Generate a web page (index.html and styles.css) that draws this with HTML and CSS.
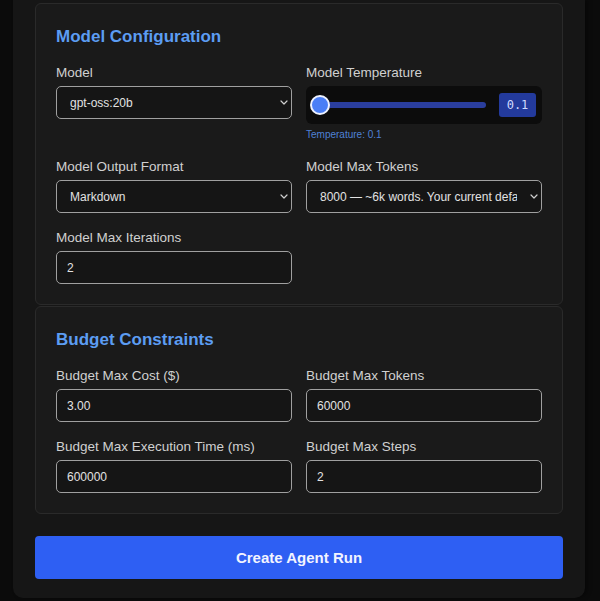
FILE: index.html
```html
<!DOCTYPE html>
<html>
<head>
<meta charset="utf-8">
<link rel="stylesheet" href="styles.css">
</head>
<body>
<div class="panel">
  <section class="card">
    <h2 class="card-title">Model Configuration</h2>
    <div class="grid">
      <div class="field">
        <label class="label">Model</label>
        <div class="select-wrap">
          <select class="control select"><option>gpt-oss:20b</option></select>
          <svg class="chev" width="8" height="5" viewBox="0 0 8 5"><path d="M1 1 L4 4 L7 1" fill="none" stroke="#cfcfcf" stroke-width="1.2" stroke-linecap="round" stroke-linejoin="round"/></svg>
        </div>
      </div>
      <div class="field">
        <label class="label">Model Temperature</label>
        <div class="temp-box">
          <div class="slider">
            <div class="track"></div>
            <div class="thumb"></div>
          </div>
          <div class="temp-value">0.1</div>
        </div>
        <div class="hint">Temperature: 0.1</div>
      </div>
      <div class="field">
        <label class="label">Model Output Format</label>
        <div class="select-wrap">
          <select class="control select"><option>Markdown</option></select>
          <svg class="chev" width="8" height="5" viewBox="0 0 8 5"><path d="M1 1 L4 4 L7 1" fill="none" stroke="#cfcfcf" stroke-width="1.2" stroke-linecap="round" stroke-linejoin="round"/></svg>
        </div>
      </div>
      <div class="field">
        <label class="label">Model Max Tokens</label>
        <div class="select-wrap">
          <select class="control select"><option>8000 — ~6k words. Your current default</option></select>
          <svg class="chev" width="8" height="5" viewBox="0 0 8 5"><path d="M1 1 L4 4 L7 1" fill="none" stroke="#cfcfcf" stroke-width="1.2" stroke-linecap="round" stroke-linejoin="round"/></svg>
        </div>
      </div>
      <div class="field">
        <label class="label">Model Max Iterations</label>
        <input class="control input" type="text" value="2">
      </div>
    </div>
  </section>
  <section class="card card-second">
    <h2 class="card-title">Budget Constraints</h2>
    <div class="grid">
      <div class="field">
        <label class="label">Budget Max Cost ($)</label>
        <input class="control input" type="text" value="3.00">
      </div>
      <div class="field">
        <label class="label">Budget Max Tokens</label>
        <input class="control input" type="text" value="60000">
      </div>
      <div class="field">
        <label class="label">Budget Max Execution Time (ms)</label>
        <input class="control input" type="text" value="600000">
      </div>
      <div class="field">
        <label class="label">Budget Max Steps</label>
        <input class="control input" type="text" value="2">
      </div>
    </div>
  </section>
  <button class="submit">Create Agent Run</button>
</div>
</body>
</html>
```
FILE: styles.css
```css
* { box-sizing: border-box; }
html, body {
  margin: 0;
  padding: 0;
  background: #0b0b0b;
  font-family: "Liberation Sans", Arial, sans-serif;
}
body { width: 600px; height: 601px; overflow: hidden; }
.panel {
  margin-left: 13px;
  width: 572px;
  background: #161616;
  padding: 3px 22px 19px;
  border-radius: 0 0 10px 10px;
  box-shadow: 3px 0 4px rgba(0,0,0,0.35);
}
.card {
  background: #1a1a1a;
  border: 1px solid #2a2a2a;
  border-radius: 6px;
  padding: 20px;
}
.card-second { margin-top: 1px; }
.card-title {
  margin: 0 0 14px;
  padding-top: 1px;
  font-size: 17px;
  line-height: 23px;
  font-weight: bold;
  color: #5c9df3;
}
.grid {
  display: grid;
  grid-template-columns: 1fr 1fr;
  column-gap: 14px;
  row-gap: 14px;
}
.field {
  display: flex;
  flex-direction: column;
  gap: 4px;
}
.label {
  font-size: 13.5px;
  line-height: 19px;
  padding-top: 1px;
  color: #d0d0d0;
}
.control {
  display: block;
  width: 100%;
  height: 33px;
  border: 1px solid #a0a0a0;
  border-radius: 5px;
  background: #151515;
  color: #e2e2e2;
  font-family: "Liberation Sans", Arial, sans-serif;
  font-size: 12px;
  outline: none;
  margin: 0;
}
.input { padding: 0 10px; }
.select-wrap { position: relative; }
.select {
  -webkit-appearance: none;
  appearance: none;
  padding: 0 24px 0 13px;
}
.chev {
  position: absolute;
  right: 4px;
  top: 14px;
  pointer-events: none;
}
.temp-box {
  display: flex;
  align-items: center;
  height: 38px;
  background: #0c0c0c;
  border-radius: 6px;
  padding: 0 6px 0 4px;
}
.slider {
  position: relative;
  flex: 1;
  height: 20px;
}
.track {
  position: absolute;
  left: 4px;
  right: 0;
  top: 7px;
  height: 6px;
  border-radius: 3px;
  background: #2a3e9e;
}
.thumb {
  position: absolute;
  left: 0;
  top: 0;
  width: 20px;
  height: 20px;
  border-radius: 50%;
  background: #4a7ef6;
  border: 2px solid #eef2ff;
}
.temp-value {
  margin-left: 13px;
  width: 37px;
  height: 24px;
  border-radius: 3px;
  background: #233a9c;
  color: #d0d9ff;
  font-family: "DejaVu Sans Mono", "Liberation Mono", monospace;
  font-size: 12px;
  line-height: 24px;
  text-align: center;
}
.hint {
  font-size: 10px;
  line-height: 14px;
  color: #4f81d6;
}
.submit {
  display: block;
  width: 100%;
  height: 43px;
  margin-top: 22px;
  border: none;
  border-radius: 4px;
  background: #2e5ff3;
  color: #f2f4ff;
  font-family: "Liberation Sans", Arial, sans-serif;
  font-size: 15px;
  font-weight: bold;
}
```
